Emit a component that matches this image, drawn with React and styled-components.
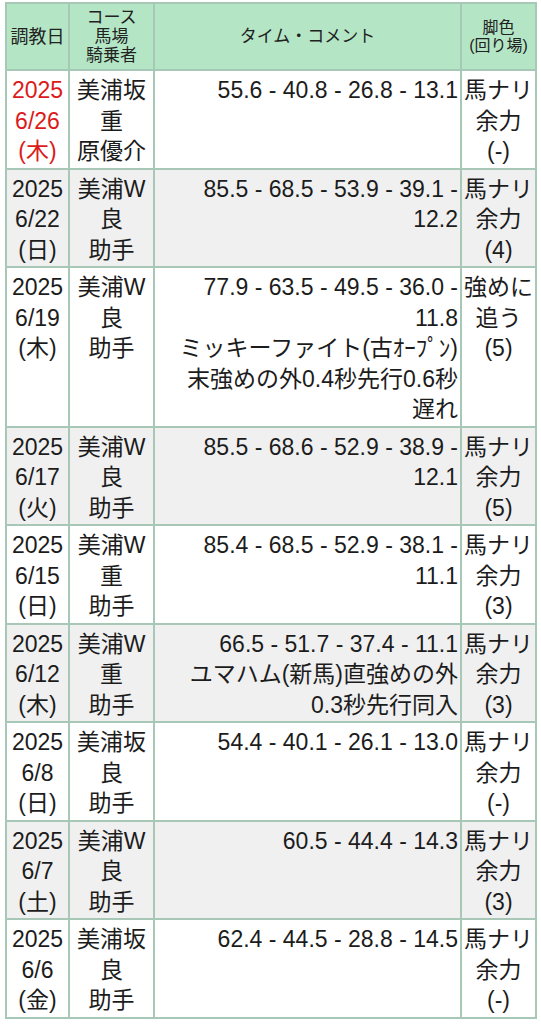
import React from "react";
import styled, { createGlobalStyle } from "styled-components";

const rows = [
  {
    year: "2025",
    date: "6/26",
    day: "(木)",
    today: true,
    course: ["美浦坂", "重", "原優介"],
    time: ["55.6 - 40.8 - 26.8 - 13.1"],
    legs: ["馬ナリ", "余力", "(-)"],
  },
  {
    year: "2025",
    date: "6/22",
    day: "(日)",
    course: ["美浦W", "良", "助手"],
    time: ["85.5 - 68.5 - 53.9 - 39.1 -", "12.2"],
    legs: ["馬ナリ", "余力", "(4)"],
  },
  {
    year: "2025",
    date: "6/19",
    day: "(木)",
    course: ["美浦W", "良", "助手"],
    time: [
      "77.9 - 63.5 - 49.5 - 36.0 -",
      "11.8",
      "ミッキーファイト(古ｵｰﾌﾟﾝ)",
      "末強めの外0.4秒先行0.6秒",
      "遅れ",
    ],
    legs: ["強めに", "追う", "(5)"],
  },
  {
    year: "2025",
    date: "6/17",
    day: "(火)",
    course: ["美浦W", "良", "助手"],
    time: ["85.5 - 68.6 - 52.9 - 38.9 -", "12.1"],
    legs: ["馬ナリ", "余力", "(5)"],
  },
  {
    year: "2025",
    date: "6/15",
    day: "(日)",
    course: ["美浦W", "重", "助手"],
    time: ["85.4 - 68.5 - 52.9 - 38.1 -", "11.1"],
    legs: ["馬ナリ", "余力", "(3)"],
  },
  {
    year: "2025",
    date: "6/12",
    day: "(木)",
    course: ["美浦W", "重", "助手"],
    time: ["66.5 - 51.7 - 37.4 - 11.1", "ユマハム(新馬)直強めの外", "0.3秒先行同入"],
    legs: ["馬ナリ", "余力", "(3)"],
  },
  {
    year: "2025",
    date: "6/8",
    day: "(日)",
    course: ["美浦坂", "良", "助手"],
    time: ["54.4 - 40.1 - 26.1 - 13.0"],
    legs: ["馬ナリ", "余力", "(-)"],
  },
  {
    year: "2025",
    date: "6/7",
    day: "(土)",
    course: ["美浦W", "良", "助手"],
    time: ["60.5 - 44.4 - 14.3"],
    legs: ["馬ナリ", "余力", "(3)"],
  },
  {
    year: "2025",
    date: "6/6",
    day: "(金)",
    course: ["美浦坂", "良", "助手"],
    time: ["62.4 - 44.5 - 28.8 - 14.5"],
    legs: ["馬ナリ", "余力", "(-)"],
  },
];

const GlobalStyle = createGlobalStyle`
  body {
    margin: 0;
    background: #ffffff;
    font-family: "Liberation Sans", "Noto Sans CJK JP", sans-serif;
    color: #1c1c1c;
  }
`;

const Page = styled.div`
  padding: 2px 0 0 5px;
`;

const Table = styled.table`
  width: 530px;
  table-layout: fixed;
  border-collapse: collapse;
  border: 2px solid #a7c7b7;
`;

const HeadCell = styled.th`
  background: #b4e6c6;
  border: 2px solid #a7c7b7;
  font-weight: normal;
  font-size: ${(p) => p.$size || 18}px;
  line-height: ${(p) => p.$lh || 20}px;
  padding: 4px 1px;
  text-align: center;
  vertical-align: middle;
  color: #222;
  white-space: nowrap;
`;

const Row = styled.tr`
  background: ${(p) => (p.$shade ? "#f0f0f0" : "#ffffff")};
`;

const Cell = styled.td`
  border: 2px solid #a7c7b7;
  font-size: 23px;
  line-height: 30.5px;
  padding: 4px 2px 1px;
  text-align: ${(p) => p.$align || "center"};
  vertical-align: top;
  white-space: nowrap;
  color: ${(p) => (p.$red ? "#dc1a1a" : "#1c1c1c")};
`;

const Line = styled.div``;

const Lines = ({ items }) => items.map((t, i) => <Line key={i}>{t}</Line>);

export default function App() {
  return (
    <Page>
      <GlobalStyle />
      <Table>
        <colgroup>
          <col style={{ width: 63 }} />
          <col style={{ width: 85 }} />
          <col style={{ width: 307 }} />
          <col style={{ width: 75 }} />
        </colgroup>
        <thead>
          <tr>
            <HeadCell>調教日</HeadCell>
            <HeadCell $size={17} $lh={19}>
              <Lines items={["コース", "馬場", "騎乗者"]} />
            </HeadCell>
            <HeadCell $size={17}>タイム・コメント</HeadCell>
            <HeadCell $size={16} $lh={18}>
              <Lines items={["脚色", "(回り場)"]} />
            </HeadCell>
          </tr>
        </thead>
        <tbody>
          {rows.map((r, i) => (
            <Row key={i} $shade={i % 2 === 1}>
              <Cell $red={r.today}>
                <Lines items={[r.year, r.date, r.day]} />
              </Cell>
              <Cell>
                <Lines items={r.course} />
              </Cell>
              <Cell $align="right">
                <Lines items={r.time} />
              </Cell>
              <Cell>
                <Lines items={r.legs} />
              </Cell>
            </Row>
          ))}
        </tbody>
      </Table>
    </Page>
  );
}
